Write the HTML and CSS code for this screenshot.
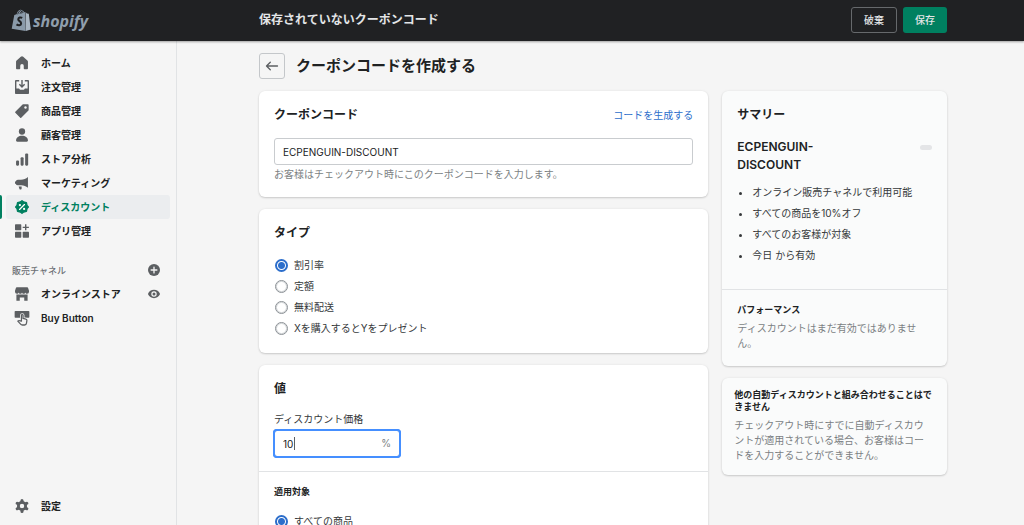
FILE: index.html
```html
<!DOCTYPE html>
<html lang="ja">
<head>
<meta charset="utf-8">
<meta name="viewport" content="width=device-width, initial-scale=1">
<title>クーポンコードを作成する</title>
<link rel="stylesheet" href="styles.css">
</head>
<body>
<div class="app">
  <header class="topbar">
    <a class="brand" href="#">
      <svg class="brand-bag" viewBox="0 0 20 23" aria-hidden="true">
        <path fill="#8a9aa9" d="M3.300 5.900 5.600 5.200C6.100 3 7.500 1 9.400.7c.8-.1 1.300.3 1.700.9 1-.1 1.600.7 1.900 1.700l1.300-.3.3 18.900L.7 19.700z"/>
        <path fill="#a9b6c2" d="m14.700 3.300 1.200 1.300 1.900.2 2 15.700-5 1.600z"/>
        <path fill="none" stroke="#202123" stroke-width=".8" d="M6.700 5.300C7.200 3.400 8.300 1.900 9.500 1.600c1.100-.1 1.300 1.400 1.200 2.900M9 4.900c.2-1.400.8-2.300 2-2.600.6.200.9.800 1 1.600"/>
        <path fill="none" stroke="#202123" stroke-width="2.100" d="M11.200 8.900C9.700 8.100 7.400 8.300 7.300 10.300c-.1 1.900 3 2 2.800 4.300-.2 2.100-2.900 2.100-4.600.8"/>
      </svg>
      <span class="brand-name">shopify</span>
    </a>
    <div class="contextual">
      <h2 class="contextual-title">保存されていないクーポンコード</h2>
      <div class="actions">
        <button class="btn btn-outline" type="button">破棄</button>
        <button class="btn btn-primary" type="button">保存</button>
      </div>
    </div>
  </header>

  <div class="body">
    <nav class="sidebar" aria-label="メイン">
      <ul class="nav-list">
        <li><a class="nav-link" href="#"><svg class="icon" viewBox="0 0 20 20"><path d="M1.500 8.200c0-.7.3-1.300.8-1.700l6-5.400a2.500 2.500 0 0 1 3.400 0l6 5.400c.5.400.8 1 .8 1.700v9.300c0 .8-.6 1.500-1.500 1.500h-3c-.8 0-1.500-.7-1.500-1.500V14a2.500 2.500 0 0 0-5 0v3.500c0 .8-.7 1.500-1.500 1.500H3c-.8 0-1.500-.7-1.500-1.500z"/></svg>ホーム</a></li>
        <li><a class="nav-link" href="#"><svg class="icon" viewBox="0 0 20 20"><path d="M1.500 0H6v2H2v10h3.500c.7 0 .8.500 1.100 1.200.4.800 1 .8 1.400.8h4c.4 0 1 0 1.400-.8.3-.7.4-1.200 1.100-1.200H18V2h-4V0h4.500c.8 0 1.500.7 1.500 1.500v17c0 .8-.7 1.500-1.500 1.500h-17C.7 20 0 19.300 0 18.500v-17C0 .7.7 0 1.500 0z"/><path d="M9 0h2v7.400l2-2 1.500 1.500L10 11.400 5.500 6.900 7 5.400l2 2z"/></svg>注文管理</a></li>
        <li><a class="nav-link" href="#"><svg class="icon" viewBox="0 0 20 20"><path stroke="currentColor" stroke-width="2" stroke-linejoin="round" d="M11.500 1.500h7v7L8.200 18.800 1.200 11.800z"/><circle cx="15" cy="5" r="1.700" fill="#f5f5f5"/></svg>商品管理</a></li>
        <li><a class="nav-link" href="#"><svg class="icon" viewBox="0 0 20 20"><circle cx="10" cy="5" r="4.500"/><path d="M1.500 17.800c0-4.300 3.800-6.800 8.500-6.800s8.500 2.500 8.500 6.800c0 .9-.7 1.700-1.700 1.700H3.200c-1 0-1.700-.8-1.700-1.700z"/></svg>顧客管理</a></li>
        <li><a class="nav-link" href="#"><svg class="icon" viewBox="0 0 20 20"><rect x="1.500" y="12" width="4.300" height="7.500" rx="1.500"/><rect x="8" y="7.500" width="4.300" height="12" rx="1.500"/><rect x="14.500" y="2" width="4.300" height="17.500" rx="1.500"/></svg>ストア分析</a></li>
        <li><a class="nav-link" href="#"><svg class="icon" viewBox="0 0 20 20"><path d="M18.500 1.500v15.300c-2.800-2.100-5.800-3.300-9.500-3.500H4A3.500 3.500 0 0 1 1 11H0V8h1a3.500 3.500 0 0 1 3-2.500h4.500c3.900-.2 7.200-1.500 10-4zM5.200 15h4.300v3c0 .8-.5 1.200-1.200 1.200H7.600c-.6 0-1-.3-1.200-.8z"/></svg>マーケティング</a></li>
        <li class="nav-current"><a class="nav-link" href="#" aria-current="page"><svg class="icon" viewBox="0 0 20 20"><path stroke="currentColor" stroke-width="2" stroke-linejoin="round" d="m10 1 2.400 1.900 3.900.8.8 3.900L19 10l-1.900 2.400-.8 3.900-3.900.8L10 19l-2.400-1.900-3.900-.8-.8-3.900L1 10l1.900-2.400.8-3.900 3.900-.8z"/><path fill="none" stroke="#fff" stroke-width="1.800" stroke-linecap="round" d="m6.500 13.500 7-7"/><circle cx="7" cy="7.200" r="1.600" fill="#fff"/><circle cx="13" cy="12.800" r="1.600" fill="#fff"/></svg>ディスカウント</a></li>
        <li><a class="nav-link" href="#"><svg class="icon" viewBox="0 0 20 20"><rect x="0" y=".5" width="9" height="8.500" rx="1"/><rect x="0" y="11" width="9" height="8.500" rx="1"/><rect x="11" y="11" width="9" height="8.500" rx="1"/><path d="M14.300.5h2v3.300h3.500v2h-3.500V9h-2V5.800H11v-2h3.300z"/></svg>アプリ管理</a></li>
      </ul>

      <div class="nav-heading">
        <h3 class="nav-heading-text">販売チャネル</h3>
        <button class="icon-button" type="button" aria-label="販売チャネルを追加"><svg class="icon-small" viewBox="0 0 20 20"><circle cx="10" cy="10" r="10"/><path fill="none" stroke="#f5f5f5" stroke-width="2.200" stroke-linecap="round" d="M10 5.200v9.600M5.200 10h9.600"/></svg></button>
      </div>
      <ul class="nav-list">
        <li class="nav-split">
          <a class="nav-link" href="#"><svg class="icon" viewBox="0 0 20 20"><path d="M2.500.5h15c.6 0 1 .3 1.200.9L20 5.500v1.300A2.700 2.700 0 0 1 17.300 9.500c-1.400 0-2.300-.8-2.500-1.800-.3 1-1.200 1.800-2.400 1.800-1.300 0-2.200-.8-2.400-1.800-.2 1-1.100 1.800-2.400 1.800-1.200 0-2.100-.8-2.400-1.800-.2 1-1.100 1.800-2.500 1.800A2.700 2.700 0 0 1 0 6.800V5.500l1.300-4.100c.2-.6.6-.9 1.200-.9z"/><path d="M2 10.700h16v8.800h-4.800V15H6.800v4.500H2z"/></svg>オンラインストア</a>
          <button class="icon-button" type="button" aria-label="ストアを表示"><svg class="icon-small" viewBox="0 0 20 20"><path fill-rule="evenodd" d="M10 3c4.600 0 8.300 2.700 9.900 6.500.1.300.1.700 0 1C18.300 14.300 14.600 17 10 17S1.700 14.300.1 10.500a1.400 1.400 0 0 1 0-1C1.700 5.700 5.400 3 10 3zm0 11.500a4.500 4.500 0 1 0 0-9 4.500 4.500 0 0 0 0 9z"/><circle cx="10" cy="10" r="2.500"/></svg></button>
        </li>
        <li><a class="nav-link" href="#"><svg class="icon icon-buy" viewBox="0 0 20 20"><path d="M.5 0h19c.6 0 1 .4 1 1v7.500c0 .6-.4 1-1 1H.5c-.6 0-1-.4-1-1V1c0-.6.4-1 1-1z"/><path fill="#f5f5f5" stroke="#f5f5f5" stroke-width="4" d="M9.200 14.500V6.200c0-1.500 2.300-1.500 2.300 0v4.500l4 .8c1 .2 1.600.9 1.500 1.800l-.6 4c-.2 1.800-1.200 2.700-2.700 2.700H10.500c-1 0-1.900-.4-2.500-1.200L4 14.500c1-1.200 2.600-1 5.200 0z"/><path fill="#f5f5f5" stroke="currentColor" stroke-width="1.800" stroke-linejoin="round" d="M9.200 14.500V6.200c0-1.500 2.300-1.500 2.300 0v4.500l4 .8c1 .2 1.600.9 1.500 1.800l-.6 4c-.2 1.800-1.200 2.700-2.700 2.700H10.500c-1 0-1.900-.4-2.500-1.200L4 14.500c1-1.200 2.600-1 5.200 0z"/></svg>Buy Button</a></li>
      </ul>

      <ul class="nav-list nav-footer">
        <li><a class="nav-link" href="#"><svg class="icon" viewBox="0 0 20 20"><path fill="none" stroke="currentColor" stroke-width="4.400" stroke-linecap="round" d="M10 2.200v2M10 15.800v2M3.200 6.100l1.800 1M15 12.900l1.800 1M3.200 13.900l1.800-1M15 7.100l1.800-1"/><circle cx="10" cy="10" r="5.200" fill="none" stroke="currentColor" stroke-width="4"/></svg>設定</a></li>
      </ul>
    </nav>

    <main class="page">
      <div class="page-head">
        <a class="back" href="#" aria-label="戻る"><svg class="back-icon" viewBox="0 0 14 14"><path fill="none" stroke="currentColor" stroke-width="1.300" stroke-linecap="round" stroke-linejoin="round" d="M12.500 7H1.700M5.300 3.300 1.500 7l3.800 3.700"/></svg></a>
        <h1 class="page-title">クーポンコードを作成する</h1>
      </div>

      <div class="columns">
        <form class="stack">
          <section class="card section">
            <div class="card-head">
              <h2 class="card-title"><label for="code">クーポンコード</label></h2>
              <a class="link" href="#">コードを生成する</a>
            </div>
            <input class="field" id="code" type="text" value="ECPENGUIN-DISCOUNT" aria-describedby="code-help">
            <p class="help subdued" id="code-help">お客様はチェックアウト時にこのクーポンコードを入力します。</p>
          </section>

          <section class="card section">
            <h2 class="card-title" id="type-title">タイプ</h2>
            <div class="choices" role="radiogroup" aria-labelledby="type-title">
              <label class="choice"><input class="radio" type="radio" name="type" checked>割引率</label>
              <label class="choice"><input class="radio" type="radio" name="type">定額</label>
              <label class="choice"><input class="radio" type="radio" name="type">無料配送</label>
              <label class="choice"><input class="radio" type="radio" name="type">Xを購入するとYをプレゼント</label>
            </div>
          </section>

          <section class="card">
            <div class="section value-section">
              <h2 class="card-title">値</h2>
              <label class="field-label" for="amount">ディスカウント価格</label>
              <div class="amount">
                <input class="field field-focused" id="amount" type="text" value="10">
                <span class="caret"></span>
                <span class="suffix">%</span>
              </div>
            </div>
            <div class="section divided">
              <h3 class="subheading" id="target-title">適用対象</h3>
              <div class="choices" role="radiogroup" aria-labelledby="target-title">
                <label class="choice"><input class="radio" type="radio" name="target" checked>すべての商品</label>
              </div>
            </div>
          </section>
        </form>

        <aside class="stack">
          <section class="card card-subdued">
            <div class="section summary">
              <h2 class="card-title">サマリー</h2>
              <div class="summary-head">
                <p class="summary-name">ECPENGUIN-DISCOUNT</p>
                <span class="badge"></span>
              </div>
              <ul class="bullets">
                <li>オンライン販売チャネルで利用可能</li>
                <li>すべての商品を10%オフ</li>
                <li>すべてのお客様が対象</li>
                <li>今日 から有効</li>
              </ul>
            </div>
            <div class="section divided">
              <h3 class="subheading">パフォーマンス</h3>
              <p class="note subdued">ディスカウントはまだ有効ではありません。</p>
            </div>
          </section>
          <section class="card card-subdued notice">
            <h3 class="subheading">他の自動ディスカウントと組み合わせることはできません</h3>
            <p class="note subdued">チェックアウト時にすでに自動ディスカウントが適用されている場合、お客様はコードを入力することができません。</p>
          </section>
        </aside>
      </div>
    </main>
  </div>
</div>
</body>
</html>
```

FILE: styles.css
```css
:root {
  --bg: #f5f5f5;
  --text: #202223;
  --body-text: #35383a;
  --subdued: #7b7f83;
  --icon: #5c5f62;
  --line: #e1e3e5;
  --green: #008060;
  --blue: #2c6ecb;
}

*,
*::before,
*::after {
  box-sizing: border-box;
}

body,
h1,
h2,
h3,
p,
ul {
  margin: 0;
  padding: 0;
}

ul {
  list-style: none;
}

a {
  color: inherit;
  text-decoration: none;
}

body {
  background: var(--bg);
  color: var(--text);
  font: 10px/15px Inter, "Noto Sans CJK JP", sans-serif;
}

button,
input {
  font: inherit;
  color: inherit;
}

.app {
  display: flex;
  flex-direction: column;
  height: 100vh;
}

/* Top bar */
.topbar {
  display: flex;
  align-items: center;
  flex: none;
  padding: 7px 0 8px;
  background: #202123;
  box-shadow: 0 1px 2px rgba(0, 0, 0, 0.35);
  z-index: 1;
}

.brand {
  display: flex;
  align-items: center;
  gap: 2px;
  flex: none;
  width: 177px;
  padding-left: 11px;
  color: #8f9eac;
}

.brand-bag {
  width: 20px;
  height: 23px;
}

.brand-name {
  padding-top: 2px;
  font: italic 700 16px/20px "Open Sans", sans-serif;
}

.contextual {
  display: flex;
  align-items: center;
  justify-content: space-between;
  flex: 1;
  padding: 0 77px 0 82px;
}

.contextual-title {
  color: #e3e5e7;
  font-size: 12px;
  font-weight: 600;
  line-height: 18px;
}

.actions {
  display: flex;
  gap: 6px;
}

.btn {
  height: 26px;
  padding: 0 11px;
  border: 1px solid transparent;
  border-radius: 3px;
  color: #e3e5e7;
  font-weight: 500;
}

.btn-outline {
  padding: 0 12px;
  background: transparent;
  border-color: #66696c;
}

.btn-primary {
  background: var(--green);
}

.body {
  display: flex;
  flex: 1;
  min-height: 0;
}

/* Sidebar */
.sidebar {
  display: flex;
  flex-direction: column;
  flex: none;
  width: 177px;
  padding: 10px 0 7px;
  border-right: 1px solid var(--line);
}

.nav-list li {
  position: relative;
  padding: 0 6px;
}

.nav-link {
  display: flex;
  align-items: center;
  gap: 12px;
  flex: 1;
  height: 24px;
  padding-left: 9px;
  border-radius: 3px;
  font-weight: 600;
}

.icon {
  flex: none;
  width: 14px;
  height: 14px;
  color: var(--icon);
  fill: currentColor;
}

.icon-buy {
  overflow: visible;
}

.nav-current .nav-link {
  background: #ebedef;
  color: var(--green);
}

.nav-current .icon {
  color: var(--green);
}

.nav-current::before {
  content: "";
  position: absolute;
  inset: 0 auto 0 0;
  width: 2px;
  border-radius: 0 2px 2px 0;
  background: var(--green);
}

.nav-heading {
  display: flex;
  align-items: center;
  justify-content: space-between;
  height: 24px;
  margin-top: 15px;
  padding: 0 16px 0 12px;
}

.nav-heading-text {
  color: #6d7175;
  font-size: 9px;
  font-weight: 500;
}

.nav-list .nav-split {
  display: flex;
  align-items: center;
  padding-right: 16px;
}

.icon-button {
  display: flex;
  padding: 0;
  border: 0;
  background: none;
}

.icon-small {
  width: 12px;
  height: 12px;
  fill: var(--icon);
}

.nav-footer {
  margin-top: auto;
}

/* Page */
.page {
  flex: 1;
  min-width: 0;
  padding: 12px 77px 12px 82px;
  overflow-y: auto;
  scrollbar-width: none;
}

.page-head {
  display: flex;
  align-items: center;
  gap: 11px;
  margin-bottom: 12px;
}

.back {
  display: flex;
  align-items: center;
  justify-content: center;
  width: 26px;
  height: 26px;
  border: 1px solid #c4c7ca;
  border-radius: 3px;
  color: var(--icon);
}

.back-icon {
  width: 14px;
  height: 14px;
}

.page-title {
  font-size: 15px;
  font-weight: 600;
  line-height: 20px;
}

.columns {
  display: grid;
  grid-template-columns: minmax(0, 2fr) minmax(0, 1fr);
  align-items: start;
  gap: 14px;
}

.stack {
  display: grid;
  gap: 12px;
}

/* Cards */
.card {
  border-radius: 6px;
  background: #fff;
  box-shadow: 0 0 3px rgba(23, 24, 24, 0.06), 0 1px 2px rgba(0, 0, 0, 0.16);
}

.card-subdued {
  background: #fafbfb;
}

.section {
  padding: 15px;
}

.divided {
  padding-top: 14px;
  border-top: 1px solid var(--line);
}

.card-head {
  display: flex;
  align-items: center;
  justify-content: space-between;
}

.card-title {
  font-size: 12px;
  font-weight: 600;
  line-height: 18px;
}

.subheading {
  font-size: 9px;
  font-weight: 700;
  line-height: 12px;
}

.link {
  color: var(--blue);
}

.subdued {
  color: var(--subdued);
}

/* Fields */
.field {
  display: block;
  width: 100%;
  height: 27px;
  padding: 0 8px;
  border: 1px solid #c9cccf;
  border-radius: 3px;
  background: #fff;
}

.card-head + .field {
  margin-top: 14px;
}

.help {
  margin-top: 2px;
}

.value-section {
  padding-bottom: 14px;
}

.field-label {
  display: block;
  margin: 14px 0 3px;
  color: var(--body-text);
}

.amount {
  position: relative;
  width: 126px;
}

.field-focused {
  outline: 2px solid #458fff;
  outline-offset: -1px;
  box-shadow: 0 0 0 1px #458fff;
}

.caret {
  position: absolute;
  top: 7px;
  left: 20px;
  width: 1px;
  height: 13px;
  background: #5c5f62;
}

.suffix {
  position: absolute;
  top: 6px;
  right: 9px;
  color: var(--subdued);
}

.choices {
  display: grid;
  justify-items: start;
  gap: 6px;
  padding: 16px 0 2px;
}

.choice {
  display: flex;
  align-items: center;
  gap: 5px;
  color: var(--body-text);
}

.radio {
  appearance: none;
  width: 13px;
  height: 13px;
  margin: 0 1px;
  border: 1px solid #8c9196;
  border-radius: 50%;
  background: #fff;
  box-shadow: inset 0 0 0 1px #d5d8da;
}

.radio:checked {
  border: 2px solid var(--blue);
  background: radial-gradient(circle, var(--blue) 3px, #fff 4px);
  box-shadow: none;
}

/* Summary */
.summary {
  padding-bottom: 26px;
}

.summary-head {
  display: flex;
  align-items: flex-start;
  justify-content: space-between;
  margin-top: 14px;
}

.summary-name {
  flex: 0 1 60%;
  font-size: 12px;
  font-weight: 600;
  line-height: 18px;
}

.badge {
  width: 12px;
  height: 5px;
  margin-top: 7px;
  border-radius: 3px;
  background: #e4e5e7;
}

.bullets {
  display: grid;
  gap: 6px;
  margin-top: 11px;
  padding-left: 15px;
  color: var(--body-text);
  list-style: disc;
}

.note {
  margin-top: 5px;
}

.notice {
  padding: 11px 14px 12px 12px;
}
```
